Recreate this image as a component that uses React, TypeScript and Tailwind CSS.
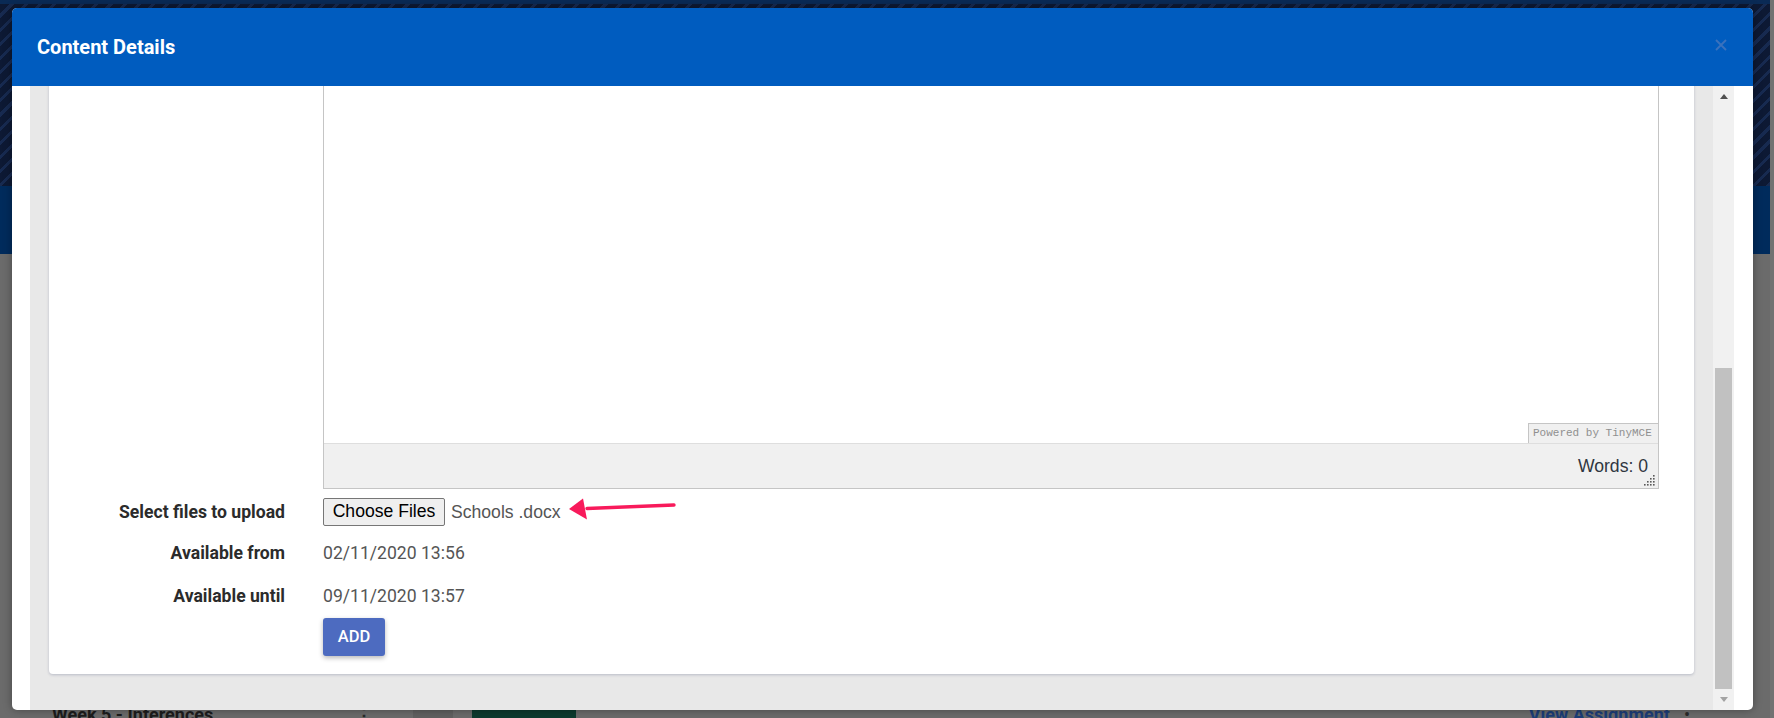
import { useState } from 'react'

const rows = [
  { label: 'Available from', value: '02/11/2020 13:56', gap: 'mt-[13px]' },
  { label: 'Available until', value: '09/11/2020 13:57', gap: 'mt-[15px]' },
]

function ResizeGrip() {
  const dots = [
    [9, 0],
    [9, 3],
    [6, 3],
    [9, 6],
    [6, 6],
    [3, 6],
    [9, 9],
    [6, 9],
    [3, 9],
    [0, 9],
  ]
  return (
    <svg width="11" height="11" viewBox="0 0 11 11" className="absolute bottom-[2px] right-[3px]">
      {dots.map(([x, y]) => (
        <rect key={`${x}-${y}`} x={x} y={y} width="1.6" height="1.6" fill="#5a5a5a" />
      ))}
    </svg>
  )
}

function Editor() {
  return (
    <div className="flex flex-col border border-[#c5c5c5]">
      <div className="relative h-[520px] bg-white">
        <div className="absolute bottom-0 right-0 flex h-[20px] w-[130px] items-center border-l border-t border-[#c5c5c5] bg-[#f0f0f0] pl-[4px] font-['Liberation_Mono',monospace] text-[11px] leading-none text-[#8f8f8f]">
          Powered by TinyMCE
        </div>
      </div>
      <div className="relative flex h-[45px] items-center justify-end border-t border-[#dedede] bg-[#f0f0f0] pr-[10px] font-['Liberation_Sans',sans-serif] text-[17.6px] text-[#2f3640]">
        Words: 0
        <ResizeGrip />
      </div>
    </div>
  )
}

function Scrollbar() {
  return (
    <div className="flex w-[21px] shrink-0 flex-col bg-[#f1f1f1]">
      <div className="flex h-[21px] items-center justify-center">
        <div className="h-0 w-0 border-x-[4.5px] border-b-[5px] border-x-transparent border-b-[#505050]" />
      </div>
      <div className="flex flex-1 flex-col pt-[261px]">
        <div className="mx-[2px] flex-1 bg-[#c1c1c1]" />
      </div>
      <div className="flex h-[21px] items-center justify-center">
        <div className="h-0 w-0 border-x-[4.5px] border-t-[5px] border-x-transparent border-t-[#a3a3a3]" />
      </div>
    </div>
  )
}

function UploadArrow() {
  return (
    <svg
      width="120"
      height="30"
      viewBox="0 0 120 30"
      className="pointer-events-none absolute left-[-3px] top-[-21px]"
    >
      <line x1="18" y1="16.5" x2="105" y2="13" stroke="#f81a5b" strokeWidth="3.4" strokeLinecap="round" />
      <polygon points="0,17 14,6.5 18,27.5" fill="#f81a5b" />
    </svg>
  )
}

function ContentCard() {
  const [fileName] = useState('Schools .docx')

  return (
    <div className="flex shrink-0 flex-col rounded-[4px] bg-white pb-[18px] pr-[35px] shadow-[0_1px_3px_rgba(20,30,80,0.22)]">
      <div className="ml-[274px]">
        <Editor />
      </div>

      <div className="mt-[9px] flex h-[28px] items-center gap-[38px]">
        <span className="w-[236px] text-right text-[17.6px] font-bold text-[#2b2b2b]">Select files to upload</span>
        <div className="flex items-center">
          <button className="h-[28px] w-[122px] rounded-[2px] border border-[#767676] bg-[#efefef] font-['Liberation_Sans',sans-serif] text-[17.6px] leading-none text-black">
            Choose Files
          </button>
          <span className="relative ml-[6px] font-['Liberation_Sans',sans-serif] text-[17.6px] text-[#555]">
            {fileName}
            <span className="relative ml-[11px] inline-block w-[110px] align-middle">
              <UploadArrow />
            </span>
          </span>
        </div>
      </div>

      {rows.map((row) => (
        <div key={row.label} className={`${row.gap} flex h-[28px] items-center gap-[38px]`}>
          <span className="w-[236px] text-right text-[17.6px] font-bold text-[#2b2b2b]">{row.label}</span>
          <span className="text-[17.6px] text-[#555]">{row.value}</span>
        </div>
      ))}

      <div className="ml-[274px] mt-[8px]">
        <button className="h-[38px] w-[62px] rounded-[3px] bg-[#4d6bc0] text-[16.5px] font-medium text-white shadow-[0_2px_5px_rgba(0,0,0,0.28)]">
          ADD
        </button>
      </div>
    </div>
  )
}

export default function App() {
  return (
    <div className="relative h-[718px] w-[1774px] overflow-hidden bg-[#6b6b6b] font-['Roboto',sans-serif]">
      {/* page behind the dimmed overlay */}
      <div className="flex h-full">
        <div className="flex flex-1 flex-col">
          <div className="h-[4px] shrink-0 bg-[#0a2a55]" />
          <div className="h-[182px] shrink-0 bg-[repeating-linear-gradient(135deg,#0d1934_0px,#0d1934_7px,#172a50_7px,#172a50_10px)]" />
          <div className="h-[68px] shrink-0 bg-[#002b5c]" />
          <div className="flex min-h-0 flex-1 items-start overflow-hidden pt-[449px]">
            <div className="flex w-[413px] items-center justify-between pl-[52px] pr-[40px]">
              <span className="text-[18px] font-bold leading-[24px] text-[#1c1c1c]">Week 5 - Inferences</span>
              <span className="text-[18px] font-bold leading-[24px] text-[#2a2a2a]">⋮</span>
            </div>
            <div className="h-[20px] w-[40px] bg-[#606060]" />
            <div className="ml-[19px] mt-[5px] h-[20px] w-[104px] bg-[#0c3a2e]" />
            <div className="flex flex-1 items-center justify-end gap-[14px] pr-[80px]">
              <span className="text-[18px] font-bold leading-[24px] text-[#1c3d78]">View Assignment</span>
              <span className="text-[18px] leading-[24px] text-[#2a2a2a]">•</span>
            </div>
          </div>
        </div>
        <div className="w-[4px] bg-[#727272]" />
      </div>

      {/* modal */}
      <div className="absolute left-[12px] top-[8px] flex h-[702px] w-[1741px] flex-col overflow-hidden rounded-[5px] bg-white shadow-[0_0_8px_rgba(0,0,0,0.35)]">
        <div className="flex h-[78px] shrink-0 items-center justify-between bg-[#005cbf] pl-[25px] pr-[26px]">
          <h2 className="text-[20px] font-bold text-white">Content Details</h2>
          <svg width="12" height="12" viewBox="0 0 12 12" className="-mt-[4px]">
            <path d="M1 1 L11 11 M11 1 L1 11" stroke="#3a72bd" strokeWidth="1.8" />
          </svg>
        </div>

        <div className="flex min-h-0 flex-1 pl-[18px] pr-[19px]">
          <div className="flex min-h-0 flex-1 overflow-hidden bg-[#e8e8e8]">
            <div className="flex min-w-0 flex-1 flex-col justify-end px-[19px] pb-[36px]">
              <ContentCard />
            </div>
            <Scrollbar />
          </div>
        </div>
      </div>
    </div>
  )
}
